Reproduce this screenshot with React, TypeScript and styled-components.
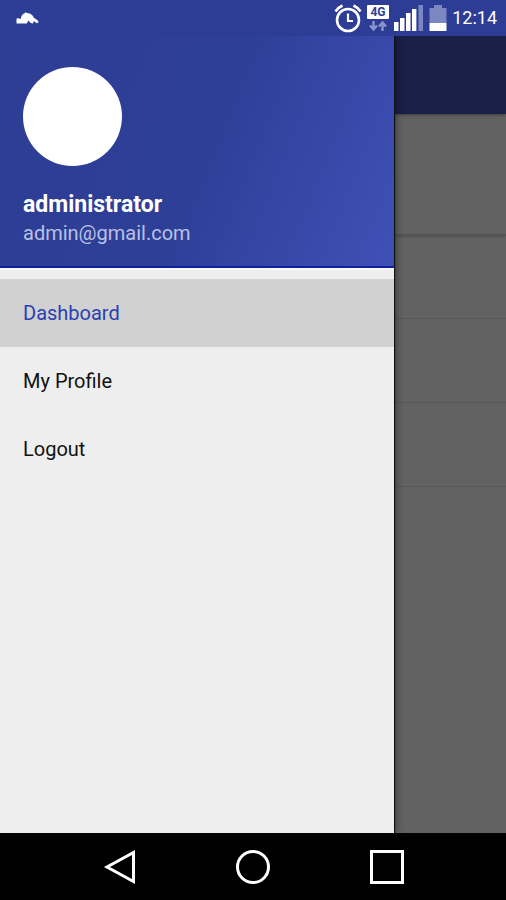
import React, { useState } from "react";
import styled, { createGlobalStyle } from "styled-components";

const GlobalStyle = createGlobalStyle`
  * { box-sizing: border-box; }
  body { margin: 0; background: #000; font-family: Roboto, "Noto Sans", sans-serif; }
  button { font: inherit; border: 0; padding: 0; background: none; cursor: pointer; }
`;

const Screen = styled.div`
  display: flex;
  flex-direction: column;
  min-height: 100vh;
`;

const StatusBar = styled.header`
  position: relative;
  z-index: 2;
  display: flex;
  align-items: center;
  justify-content: space-between;
  height: 36px;
  padding: 0 9px 0 16px;
  background: #2d3c94;
`;

const StatusIcons = styled.div`
  display: flex;
  align-items: center;
  gap: 5px;
`;

const Clock = styled.time`
  color: #fff;
  font-size: 18px;
  line-height: 38px;
`;

const Body = styled.div`
  display: flex;
  flex: 1;
`;

const Drawer = styled.aside`
  position: relative;
  z-index: 1;
  flex: 1;
  background: #eeeeee;
  box-shadow: 1px 0 1px #111, 2px 0 8px rgba(0, 0, 0, 0.4);
`;

const Profile = styled.section`
  display: flex;
  flex-direction: column;
  padding: 31px 23px 18px;
  border-bottom: 2px solid #14209a;
  background: linear-gradient(112deg, #2e3d94 0%, #2e3f98 52%, #3748a9 78%, #3f51b5 100%);
`;

const Avatar = styled.div`
  width: 99px;
  height: 99px;
  margin-bottom: 25px;
  border-radius: 50%;
  background: #fff;
`;

const UserName = styled.strong`
  color: #fff;
  font-size: 23px;
  font-weight: 700;
  line-height: 28px;
`;

const Email = styled.span`
  color: #b9c1e6;
  font-size: 20px;
  line-height: 29px;
`;

const Menu = styled.nav`
  display: flex;
  flex-direction: column;
  padding-top: 9px;
  border-top: 2px solid #f8f8f8;
`;

const MenuItem = styled.button<{ $active: boolean }>`
  height: 68px;
  padding: 0 23px;
  background: ${(p) => (p.$active ? "#d1d1d1" : "transparent")};
  color: ${(p) => (p.$active ? "#2b40b0" : "#111")};
  font-size: 20px;
  text-align: left;
`;

const Backdrop = styled.main`
  width: 112px;
  background: #626262;
`;

const Toolbar = styled.div`
  height: 78px;
  background: #1a2048;
  box-shadow: 0 1px 3px rgba(0, 0, 0, 0.4);
`;

const Card = styled.div`
  height: 122px;
  border-bottom: 2px solid #545454;
  box-shadow: 0 1px 2px rgba(0, 0, 0, 0.15);
`;

const ListRow = styled.div`
  height: 84px;
  border-bottom: 1px solid #575757;

  &:first-of-type { height: 83px; }
`;

const List = styled.section`
  display: flex;
  flex-direction: column;
`;

const NavBar = styled.footer`
  display: flex;
  align-items: center;
  justify-content: center;
  gap: 98px;
  height: 67px;
  background: #000;
`;

const NavButton = styled.button`
  display: flex;
  width: 36px;
  height: 36px;
`;

const BirdIcon = () => (
  <svg width="24" height="14" viewBox="0 0 24 14" fill="#fff" aria-hidden="true">
    <path d="M.5 12.500V7.500l2.300-.2 2 .8C5.100 4.800 6.500 3 8.500 2.600L9.200 1.200l1.800.9c4 .1 6 2.600 7 4.900 2 .9 4 2.100 4.700 4.200l-2 1.100-3-2.200-.7 2.400-2.300-.4-2.400-2.500-1.400 2.900Z" />
  </svg>
);

const AlarmIcon = () => (
  <svg width="28" height="30" viewBox="0 0 28 30" fill="none" stroke="#fff" aria-hidden="true">
    <circle cx="14" cy="17" r="11" strokeWidth="2.600" />
    <path d="M14 10.500v7.500h5" strokeWidth="2.200" />
    <path d="M1.500 8.500Q4 4.500 8.500 2.500M26.500 8.500Q24 4.500 19.500 2.500" strokeWidth="2.600" />
  </svg>
);

const NetworkIcon = () => (
  <svg width="22" height="28" viewBox="0 0 22 28" aria-hidden="true">
    <rect width="22" height="14" y="1" rx="1" fill="#fff" />
    <text x="11" y="12" textAnchor="middle" fill="#2d3c94" fontFamily="Roboto, sans-serif" fontSize="12" fontWeight="700">4G</text>
    <path d="M6.500 17v8M3 21.500l3.500 4 3.500-4M15.500 27v-8M12 22.500l3.500-4 3.500 4" fill="none" stroke="#8c96cb" strokeWidth="2.400" />
  </svg>
);

const SignalIcon = () => (
  <svg width="30" height="28" viewBox="0 0 30 28" aria-hidden="true">
    <path d="M0 18h4.500v9H0zM6 14h4.500v13H6zM12 9h4.500v18H12zM18 5h4v22h-4z" fill="#fff" />
    <path d="M22 5h1v22h-1zM24.500 1H29v26h-4.500z" fill="#7b86c2" />
  </svg>
);

const BatteryIcon = () => (
  <svg width="18" height="28" viewBox="0 0 18 28" aria-hidden="true">
    <path d="M5 1h8v3h4.500v15H.500V4H5z" fill="#7b86c2" />
    <path d="M.500 19h17v8H.500z" fill="#fff" />
  </svg>
);

const menuItems = ["Dashboard", "My Profile", "Logout"];

export default function App() {
  const [active, setActive] = useState("Dashboard");
  return (
    <>
      <GlobalStyle />
      <Screen>
        <StatusBar>
          <BirdIcon />
          <StatusIcons>
            <AlarmIcon />
            <NetworkIcon />
            <SignalIcon />
            <BatteryIcon />
            <Clock>12:14</Clock>
          </StatusIcons>
        </StatusBar>
        <Body>
          <Drawer>
            <Profile>
              <Avatar />
              <UserName>administrator</UserName>
              <Email>admin@gmail.com</Email>
            </Profile>
            <Menu>
              {menuItems.map((item) => (
                <MenuItem key={item} $active={item === active} onClick={() => setActive(item)}>
                  {item}
                </MenuItem>
              ))}
            </Menu>
          </Drawer>
          <Backdrop>
            <Toolbar />
            <Card />
            <List>
              <ListRow />
              <ListRow />
              <ListRow />
            </List>
          </Backdrop>
        </Body>
        <NavBar>
          <NavButton aria-label="Back">
            <svg width="36" height="36" viewBox="0 0 36 36" fill="none" stroke="#fff" strokeWidth="3">
              <path d="M32.500 3.500v29L6 18Z" />
            </svg>
          </NavButton>
          <NavButton aria-label="Home">
            <svg width="36" height="36" viewBox="0 0 36 36" fill="none" stroke="#fff" strokeWidth="3">
              <circle cx="18" cy="18" r="15.500" />
            </svg>
          </NavButton>
          <NavButton aria-label="Recent apps">
            <svg width="36" height="36" viewBox="0 0 36 36" fill="none" stroke="#fff" strokeWidth="3">
              <rect x="2.500" y="2.500" width="31" height="31" />
            </svg>
          </NavButton>
        </NavBar>
      </Screen>
    </>
  );
}
